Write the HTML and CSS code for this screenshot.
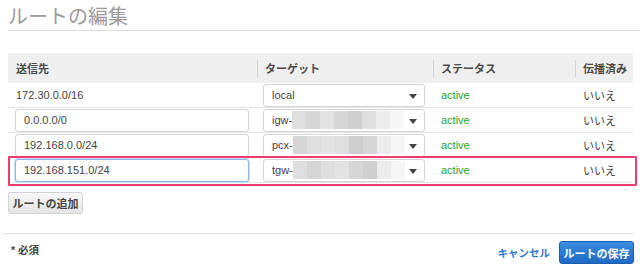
FILE: index.html
```html
<!DOCTYPE html>
<html lang="ja">
<head>
<meta charset="utf-8">
<link rel="stylesheet" href="styles.css">
</head>
<body>
<div class="page">
  <h1 class="title">ルートの編集</h1>
  <div class="table">
    <div class="row head">
      <div class="cell">送信先</div>
      <div class="cell sep">ターゲット</div>
      <div class="cell sep">ステータス</div>
      <div class="cell sep">伝播済み</div>
    </div>
    <div class="row">
      <div class="cell">172.30.0.0/16</div>
      <div class="cell"><div class="select"><span>local</span><i class="arrow"></i></div></div>
      <div class="cell status">active</div>
      <div class="cell">いいえ</div>
    </div>
    <div class="row">
      <div class="cell"><div class="input">0.0.0.0/0</div></div>
      <div class="cell"><div class="select"><span>igw-</span><span class="blur"><b class="g1"></b><b class="g2"></b><b class="g3"></b><b class="g2"></b><b class="g4"></b><b class="g1"></b><b class="g5"></b><b class="g6"></b></span><i class="arrow"></i></div></div>
      <div class="cell status">active</div>
      <div class="cell">いいえ</div>
    </div>
    <div class="row">
      <div class="cell"><div class="input">192.168.0.0/24</div></div>
      <div class="cell"><div class="select"><span>pcx-</span><span class="blur"><b class="g2"></b><b class="g1"></b><b class="g3"></b><b class="g1"></b><b class="g4"></b><b class="g2"></b><b class="g5"></b><b class="g6"></b></span><i class="arrow"></i></div></div>
      <div class="cell status">active</div>
      <div class="cell">いいえ</div>
    </div>
    <div class="row marked">
      <div class="cell"><div class="input focus">192.168.151.0/24</div></div>
      <div class="cell"><div class="select"><span>tgw-</span><span class="blur"><b class="g1"></b><b class="g2"></b><b class="g1"></b><b class="g3"></b><b class="g2"></b><b class="g4"></b><b class="g5"></b><b class="g6"></b></span><i class="arrow"></i></div></div>
      <div class="cell status">active</div>
      <div class="cell">いいえ</div>
    </div>
  </div>
  <button class="btn add">ルートの追加</button>
</div>
<div class="footer">
  <div class="required">* 必須</div>
  <div class="actions">
    <a class="cancel">キャンセル</a>
    <button class="btn primary">ルートの保存</button>
  </div>
</div>
</body>
</html>
```

FILE: styles.css
```css
html, body {
  margin: 0;
  padding: 0;
  background: #fff;
}
body {
  font-family: "Liberation Sans", "Noto Sans CJK JP", sans-serif;
  font-size: 11px;
  color: #444;
  width: 640px;
  height: 279px;
  overflow: hidden;
}
.page {
  padding: 0 7px 0 8px;
}
.title {
  margin: 0;
  padding-top: 5px;
  height: 25px;
  font-size: 20px;
  line-height: 24px;
  font-weight: normal;
  color: #9b9b9b;
  border-bottom: 1px solid #dcdcdc;
  margin-right: -7px;
}
.table {
  margin-top: 22px;
}
.row {
  display: grid;
  grid-template-columns: 249px 176px 142px 1fr;
  height: 25px;
  border-bottom: 1px solid #e6e6e6;
  box-sizing: border-box;
  position: relative;
}
.row.head {
  height: 30px;
  background: #efefef;
  border-bottom: none;
  font-weight: bold;
  color: #4a4a4a;
}
.cell {
  display: flex;
  align-items: center;
  padding-left: 8px;
  position: relative;
}
.head .cell.sep::before {
  content: "";
  position: absolute;
  left: 0;
  top: 7px;
  bottom: 6px;
  width: 1px;
  background: #d4d4d4;
}
.row:not(.head) .cell:nth-child(1):has(.input) {
  padding-left: 7px;
}
.row:not(.head) .cell:nth-child(2) {
  padding-left: 6px;
}
.input {
  box-sizing: border-box;
  width: 234px;
  height: 23px;
  border: 1px solid #d5d5d5;
  border-radius: 3px;
  padding-left: 8px;
  display: flex;
  align-items: center;
  color: #444;
  background: #fff;
}
.input.focus {
  border-color: #86b6ea;
  box-shadow: 0 0 1px 1px #c9def5;
}
.select {
  box-sizing: border-box;
  width: 162px;
  height: 23px;
  border: 1px solid #d5d5d5;
  border-radius: 3px;
  padding-left: 8px;
  display: flex;
  align-items: center;
  position: relative;
  background: #fff;
}
.arrow {
  position: absolute;
  right: 7px;
  top: 9px;
  width: 0;
  height: 0;
  border-left: 4px solid transparent;
  border-right: 4px solid transparent;
  border-top: 5px solid #444;
}
.blur {
  display: flex;
  height: 18px;
}
.blur b {
  display: block;
  width: 14px;
  height: 18px;
}
.g1 { background: #dedede; }
.g2 { background: #d6d6d6; }
.g3 { background: #e3e3e3; }
.g4 { background: #cfcfcf; }
.g5 { background: #ececec; }
.g6 { background: #f6f6f6; }
.status {
  color: #2aa22a;
}
.row.marked::after {
  content: "";
  position: absolute;
  left: 0;
  right: -4px;
  top: -2px;
  bottom: -4px;
  border: 2px solid #ef3b6e;
  border-radius: 1px;
  pointer-events: none;
}
.btn {
  font-family: "Liberation Sans", "Noto Sans CJK JP", sans-serif;
  font-size: 11px;
  font-weight: bold;
  border-radius: 3px;
  cursor: pointer;
}
.add {
  margin-top: 9px;
  height: 22px;
  width: 75px;
  padding: 0;
  color: #444;
  border: 1px solid #d3d3d3;
  background: linear-gradient(#f7f7f7, #e6e6e6);
  display: block;
}
.footer {
  margin: 19px 7px 0 2px;
  border-top: 1px solid #e3e3e3;
  display: flex;
  justify-content: space-between;
  align-items: flex-start;
}
.required {
  margin-left: 9px;
  margin-top: 8px;
  font-size: 10.5px;
  font-weight: bold;
  color: #444;
}
.actions {
  display: flex;
  align-items: center;
  gap: 9px;
  margin-top: 7px;
}
.cancel {
  color: #2a7ad0;
  font-weight: bold;
  font-size: 10.5px;
}
.primary {
  height: 23px;
  width: 75px;
  padding: 0;
  color: #fff;
  border: 1px solid #1b5fb0;
  background: linear-gradient(#3b8ce0, #1f6ac4);
  margin-right: -1px;
}
```
